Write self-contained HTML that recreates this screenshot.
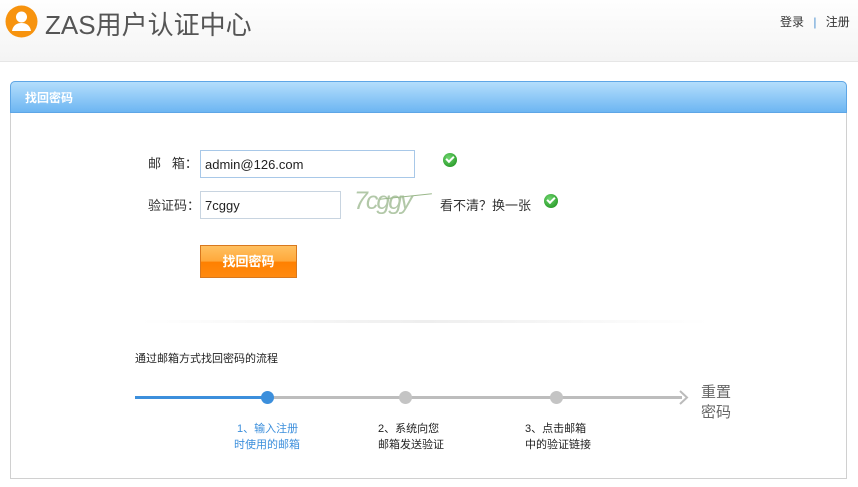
<!DOCTYPE html>
<html><head><meta charset="utf-8"><style>
*{margin:0;padding:0;box-sizing:border-box}
body{width:858px;height:487px;background:#fff;font-family:"Liberation Sans","Noto Sans CJK SC",sans-serif;font-size:12px;color:#333;position:relative;overflow:hidden}
.top{position:absolute;left:0;top:0;width:858px;height:62px;background:linear-gradient(#fefefe,#f4f4f4);border-bottom:1px solid #e6e6e6}
.abs{position:absolute;white-space:nowrap}
.panel{position:absolute;left:10px;top:81px;width:837px;height:398px;border:1px solid #d0d0d0;border-radius:5px 5px 0 0}
.ph{position:absolute;left:-1px;top:-1px;width:837px;height:32px;border:1px solid #5ea6e6;border-radius:5px 5px 0 0;background:linear-gradient(#b4defc,#6db6f2);color:#fff;font-weight:bold;font-size:12px;padding:7px 0 0 14px}
.inp{position:absolute;border:1px solid #c8d4e0;background:#fff;font-size:13px;color:#222;padding:6px 0 0 4px}
.chk{position:absolute;width:14px;height:14px;border-radius:50%;background:radial-gradient(circle at 40% 35%,#6fd66f,#168a16)}
.chk:after{content:"";position:absolute;left:3px;top:3px;width:6px;height:3px;border-left:2px solid #fff;border-bottom:2px solid #fff;transform:rotate(-45deg)}
.dot{position:absolute;top:391px;width:13px;height:13px;border-radius:50%;background:#c4c4c4}
</style></head><body>
<div class="top"></div>
<svg class="abs" style="left:5px;top:5px" width="33" height="33" viewBox="0 0 33 33"><circle cx="16.5" cy="16.5" r="16" fill="#f7930e"/><circle cx="16.5" cy="12" r="5.5" fill="#fff"/><path d="M7 26c1-6 5-8 9.5-8s8.5 2 9.5 8z" fill="#fff"/></svg>
<div class="abs" style="left:45px;top:5px;font-size:26px;color:#555">ZAS用户认证中心</div>
<div class="abs" style="left:780px;top:13px;font-size:12px;color:#333">登录 <span style="color:#4a90d0;margin:0 6px">|</span> 注册</div>
<div class="panel"><div class="ph">找回密码</div></div>
<div class="abs" style="left:148px;top:153px;font-size:13px">邮&nbsp;&nbsp;&nbsp;箱：</div>
<div class="inp" style="left:200px;top:150px;width:215px;height:28px;border-color:#a8c8e8">admin@126.com</div>
<div class="chk" style="left:443px;top:153px"></div>
<div class="abs" style="left:148px;top:195px;font-size:13px">验证码：</div>
<div class="inp" style="left:200px;top:191px;width:141px;height:28px">7cggy</div>
<div class="abs" style="left:354px;top:187px;font-size:25px;font-style:italic;color:#b2c8a8;letter-spacing:-2px">7cggy</div>
<div class="abs" style="left:380px;top:196px;width:52px;height:1px;background:#9ab88a;transform:rotate(-6deg)"></div>
<div class="abs" style="left:440px;top:195px;font-size:13px">看不清？换一张</div>
<div class="chk" style="left:544px;top:194px"></div>
<div class="abs" style="left:200px;top:245px;width:97px;height:33px;border:1px solid #d8781e;background:linear-gradient(#ffc060 0%,#ffa83a 50%,#ff8000 51%,#ff8a10 100%);color:#fff;font-weight:bold;font-size:13px;text-align:center;line-height:31px">找回密码</div>
<div class="abs" style="left:140px;top:320px;width:570px;height:3px;background:linear-gradient(90deg,#fff,#eee,#fff)"></div>
<div class="abs" style="left:135px;top:350px;font-size:11px;color:#222">通过邮箱方式找回密码的流程</div>
<div class="abs" style="left:135px;top:396px;width:133px;height:3px;background:#3c8fdc"></div>
<div class="abs" style="left:268px;top:396px;width:414px;height:3px;background:#bdbdbd"></div>
<svg class="abs" style="left:678px;top:390px" width="12" height="15"><path d="M2 1l7 6.5-7 6.5" fill="none" stroke="#bbb" stroke-width="2"/></svg>
<div class="dot" style="left:261px;background:#3c8fdc"></div>
<div class="dot" style="left:399px"></div>
<div class="dot" style="left:550px"></div>
<div class="abs" style="left:701px;top:383px;font-size:15px;color:#666;line-height:20px;white-space:normal;width:34px">重置密码</div>
<div class="abs" style="left:234px;top:421px;font-size:11px;color:#3c8fdc;line-height:16px">&nbsp;1、输入注册<br>时使用的邮箱</div>
<div class="abs" style="left:378px;top:421px;font-size:11px;color:#222;line-height:16px">2、系统向您<br>邮箱发送验证</div>
<div class="abs" style="left:525px;top:421px;font-size:11px;color:#222;line-height:16px">3、点击邮箱<br>中的验证链接</div>
</body></html>
